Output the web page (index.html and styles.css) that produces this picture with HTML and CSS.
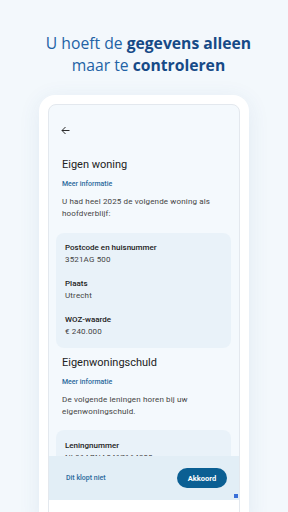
FILE: index.html
```html
<!DOCTYPE html>
<html lang="nl">
<head>
    <meta charset="UTF-8">
    <meta name="viewport" content="width=device-width, initial-scale=1.0">
    <title>Eigen woning</title>
    <link rel="stylesheet" href="styles.css">
</head>
<body>
    <div class="page">
        <h1 class="headline">U hoeft de <b>gegevens alleen</b><br>maar te <b>controleren</b></h1>

        <div class="phone">
            <div class="screen">
                <div class="content">
                    <div class="back">
                        <svg width="9" height="9" viewBox="0 0 9 9"><path d="M8.5 4.5H1 M4.5 1 1 4.5 4.5 8" fill="none" stroke="#2b2b2b" stroke-width="1"/></svg>
                    </div>

                    <div class="section">
                        <h2>Eigen woning</h2>
                        <a href="#" class="more">Meer informatie</a>
                        <p>U had heel 2025 de volgende woning als hoofdverblijf:</p>
                    </div>
                    <div class="card">
                        <div class="field">
                            <div class="label">Postcode en huisnummer</div>
                            <div class="value">3521AG 500</div>
                        </div>
                        <div class="field">
                            <div class="label">Plaats</div>
                            <div class="value">Utrecht</div>
                        </div>
                        <div class="field">
                            <div class="label">WOZ-waarde</div>
                            <div class="value">€ 240.000</div>
                        </div>
                    </div>

                    <div class="section second">
                        <h2>Eigenwoningschuld</h2>
                        <a href="#" class="more">Meer informatie</a>
                        <p>De volgende leningen horen bij uw eigenwoningschuld.</p>
                    </div>
                    <div class="card">
                        <div class="field">
                            <div class="label">Leningnummer</div>
                            <div class="value">NL91ABNA0417164300</div>
                        </div>
                    </div>
                </div>
                <div class="actions">
                    <a href="#" class="decline">Dit klopt niet</a>
                    <button class="accept">Akkoord</button>
                    <span class="dot"></span>
                </div>
                <div class="navbar"></div>
            </div>
        </div>
    </div>
</body>
</html>
```

FILE: styles.css
```css
* {
    box-sizing: border-box;
}
body {
    margin: 0;
    background: #f3f8fc;
    font-family: Roboto, "Liberation Sans", sans-serif;
    overflow: hidden;
}
.page {
    height: 512px;
    overflow: hidden;
    padding-top: 32px;
}
.headline {
    margin: 0;
    padding-left: 9px;
    text-align: center;
    font-family: "Open Sans", "Noto Sans", sans-serif;
    font-weight: 400;
    font-size: 15.7px;
    line-height: 22px;
    color: #2262a5;
}
.headline b {
    font-weight: 700;
    color: #164a87;
}

.phone {
    width: 210px;
    margin: 19px 0 0 39px;
    border: 9px solid #fff;
    border-bottom: none;
    border-radius: 16px 16px 0 0;
    background: #fff;
    box-shadow: 0 4px 22px rgba(40, 90, 140, 0.09);
}
.screen {
    position: relative;
    height: 420px;
    display: flex;
    flex-direction: column;
    border: 1px solid #e3e8ee;
    border-radius: 8px 8px 0 0;
    background: #f4f9fd;
    overflow: hidden;
}
.content {
    height: 351px;
    flex: none;
    overflow: hidden;
    padding: 19px 8px 0 7px;
}
.back {
    height: 12px;
    padding-left: 5px;
    display: flex;
    align-items: center;
}
.section {
    padding-left: 6px;
    margin-top: 21px;
}
.section.second {
    margin-top: 7px;
}
.section h2 {
    margin: 0;
    font-size: 11px;
    line-height: 16px;
    font-weight: 400;
    color: #222;
}
.more {
    display: block;
    margin-top: 6px;
    font-size: 7px;
    line-height: 10px;
    font-weight: 500;
    color: #2b6a9c;
    text-decoration: none;
}
.section p {
    margin: 7px 0 0;
    font-size: 8px;
    line-height: 12px;
    letter-spacing: 0.15px;
    color: #444;
}
.card {
    margin-top: 13px;
    background: #e9f2f9;
    border-radius: 8px;
    padding: 9px 9px 10px;
}
.second + .card {
    margin-top: 12px;
    padding-top: 10px;
}
.field + .field {
    margin-top: 12px;
}
.label {
    font-size: 8px;
    line-height: 12px;
    font-weight: 500;
    color: #222;
}
.value {
    font-size: 8px;
    line-height: 12px;
    letter-spacing: 0.15px;
    color: #444;
}

.actions {
    position: relative;
    height: 44px;
    flex: none;
    display: flex;
    align-items: center;
    justify-content: space-between;
    padding: 0 12px 0 17px;
    background: #e2eef6;
}
.decline {
    font-size: 7px;
    font-weight: 500;
    color: #2b6a9c;
    text-decoration: none;
}
.accept {
    width: 50px;
    height: 20px;
    border: none;
    border-radius: 10px;
    background: #0b5f93;
    color: #fff;
    font-family: inherit;
    font-size: 7.5px;
    font-weight: 700;
    padding: 0;
}
.dot {
    position: absolute;
    right: 1px;
    bottom: 2px;
    width: 4px;
    height: 4px;
    background: #3a6fd8;
}
.navbar {
    flex: 1;
    background: #fff;
}
```
